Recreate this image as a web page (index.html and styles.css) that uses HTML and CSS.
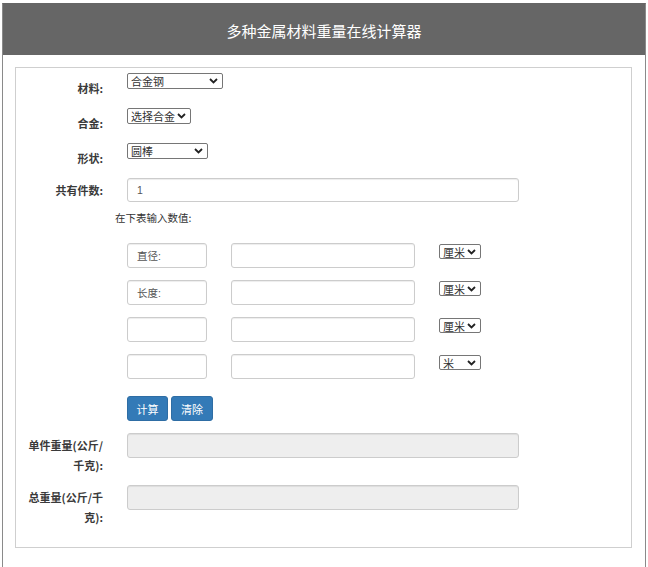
FILE: index.html
```html
<!DOCTYPE html>
<html lang="zh-CN">
<head>
<meta charset="utf-8">
<title>多种金属材料重量在线计算器</title>
<link rel="stylesheet" href="styles.css">
</head>
<body>
<div class="wrap">
  <div class="header">多种金属材料重量在线计算器</div>
  <div class="card">
    <div class="row row-sel">
      <label class="lbl">材料:</label>
      <span class="sel sel-mat"><select><option>合金钢</option></select><svg class="chev" viewBox="0 0 9 6" width="9" height="6"><path d="M1 1 L4.5 4.5 L8 1" fill="none" stroke="#222" stroke-width="1.8"/></svg></span>
    </div>
    <div class="row row-sel">
      <label class="lbl">合金:</label>
      <span class="sel sel-alloy"><select><option>选择合金</option></select><svg class="chev" viewBox="0 0 9 6" width="9" height="6"><path d="M1 1 L4.5 4.5 L8 1" fill="none" stroke="#222" stroke-width="1.8"/></svg></span>
    </div>
    <div class="row row-sel">
      <label class="lbl">形状:</label>
      <span class="sel sel-shape"><select><option>圆棒</option></select><svg class="chev" viewBox="0 0 9 6" width="9" height="6"><path d="M1 1 L4.5 4.5 L8 1" fill="none" stroke="#222" stroke-width="1.8"/></svg></span>
    </div>
    <div class="row row-count">
      <label class="lbl">共有件数:</label>
      <input class="inp inp-wide" type="text" value="1">
    </div>
    <div class="hint">在下表输入数值:</div>
    <div class="grid">
      <div class="grow">
        <input class="inp inp-name" type="text" value="直径:">
        <input class="inp inp-val" type="text">
        <span class="sel sel-unit"><select><option>厘米</option></select><svg class="chev" viewBox="0 0 9 6" width="9" height="6"><path d="M1 1 L4.5 4.5 L8 1" fill="none" stroke="#222" stroke-width="1.8"/></svg></span>
      </div>
      <div class="grow">
        <input class="inp inp-name" type="text" value="长度:">
        <input class="inp inp-val" type="text">
        <span class="sel sel-unit"><select><option>厘米</option></select><svg class="chev" viewBox="0 0 9 6" width="9" height="6"><path d="M1 1 L4.5 4.5 L8 1" fill="none" stroke="#222" stroke-width="1.8"/></svg></span>
      </div>
      <div class="grow">
        <input class="inp inp-name" type="text">
        <input class="inp inp-val" type="text">
        <span class="sel sel-unit"><select><option>厘米</option></select><svg class="chev" viewBox="0 0 9 6" width="9" height="6"><path d="M1 1 L4.5 4.5 L8 1" fill="none" stroke="#222" stroke-width="1.8"/></svg></span>
      </div>
      <div class="grow">
        <input class="inp inp-name" type="text">
        <input class="inp inp-val" type="text">
        <span class="sel sel-unit"><select><option>米</option></select><svg class="chev" viewBox="0 0 9 6" width="9" height="6"><path d="M1 1 L4.5 4.5 L8 1" fill="none" stroke="#222" stroke-width="1.8"/></svg></span>
      </div>
    </div>
    <div class="btns">
      <button class="btn" type="button">计算</button>
      <button class="btn" type="button">清除</button>
    </div>
    <div class="row row-res">
      <label class="lbl lbl-res">单件重量(公斤/千克):</label>
      <input class="inp inp-wide inp-dis" type="text" disabled>
    </div>
    <div class="row row-res row-last">
      <label class="lbl lbl-res">总重量(公斤/千克):</label>
      <input class="inp inp-wide inp-dis" type="text" disabled>
    </div>
  </div>
</div>
</body>
</html>
```
FILE: styles.css
```css
* { box-sizing: border-box; }
html, body { margin: 0; padding: 0; background: #fff; }
body {
  padding: 3px 2px 0 2px;
  font-family: "Liberation Sans", "Noto Sans CJK SC", sans-serif;
  color: #333;
  font-size: 11px;
}
.wrap {
  width: 644px;
  border: 1px solid #8a8a8a;
  border-top-color: #666;
  padding-bottom: 40px;
}
.header {
  height: 51px;
  background: #666;
  color: #fff;
  font-family: "Noto Sans CJK SC", sans-serif;
  font-size: 15px;
  display: flex;
  align-items: center;
  justify-content: center;
  padding-top: 2px;
}
.card {
  margin: 12px 13px 0 12px;
  border: 1px solid #cfcfcf;
  padding: 5px 0 20px 0;
}
.row {
  display: flex;
  align-items: flex-start;
}
.lbl {
  width: 87px;
  padding-left: 10px;
  text-align: right;
  font-weight: bold;
  font-size: 11px;
  line-height: 14px;
  font-family: "Noto Sans CJK SC", sans-serif;
  color: #3a3a3a;
  margin-right: 24px;
  flex: none;
}
.row-sel { height: 20px; margin-bottom: 15px; }
.row-sel .lbl { padding-top: 8px; }
.row-count { align-items: center; height: 24px; margin-bottom: 8px; }
.sel {
  display: inline-flex;
  align-items: center;
  height: 16px;
  border: 1px solid #767676;
  border-radius: 2px;
  background: #fff;
  padding-right: 4px;
  flex: none;
}
.sel select {
  appearance: none;
  -webkit-appearance: none;
  border: none;
  background: transparent;
  font-family: "Noto Sans CJK SC", sans-serif;
  font-size: 11px;
  color: #333;
  padding: 0 0 0 3px;
  margin: 0;
  height: 14px;
  line-height: 14px;
  flex: 1;
  min-width: 0;
  outline: none;
}
.chev { flex: none; display: block; }
.sel-mat { width: 96px; }
.sel-alloy { width: 64px; }
.sel-shape { width: 81px; }
.sel-unit { width: 42px; height: 15px; margin-top: 1px; }
.inp {
  height: 25px;
  border: 1px solid #ccc;
  border-radius: 3px;
  box-shadow: inset 0 1px 1px rgba(0,0,0,.075);
  background: #fff;
  font-family: "Liberation Sans", "Noto Sans CJK SC", sans-serif;
  font-size: 10.5px;
  color: #555;
  padding: 0 9px;
  margin: 0;
  flex: none;
  outline: none;
}
.inp-wide { width: 392px; height: 24px; }
.inp-name { width: 80px; }
.inp-val { width: 184px; }
.inp-dis { background: #eee; height: 25px; }
.hint {
  margin-left: 99px;
  font-family: "Noto Sans CJK SC", sans-serif;
  font-size: 10.5px;
  line-height: 14px;
  color: #333;
  padding-top: 1px;
}
.grid {
  margin-top: 18px;
  padding-left: 111px;
  display: flex;
  flex-direction: column;
  gap: 12px;
}
.grow {
  display: flex;
  align-items: flex-start;
  gap: 24px;
}
.btns {
  display: flex;
  gap: 3px;
  padding-left: 111px;
  margin-top: 17px;
}
.btn {
  height: 25px;
  width: 41px;
  background: #337ab7;
  border: 1px solid #2e6da4;
  border-radius: 3px;
  color: #fff;
  font-family: "Noto Sans CJK SC", sans-serif;
  font-size: 11px;
  padding: 0;
  margin: 0;
}
.btn + .btn { width: 42px; }
.row-res { margin-top: 12px; min-height: 42px; }
.row-last { margin-top: 10px; }
.lbl-res { padding-top: 2px; line-height: 20px; }
```
